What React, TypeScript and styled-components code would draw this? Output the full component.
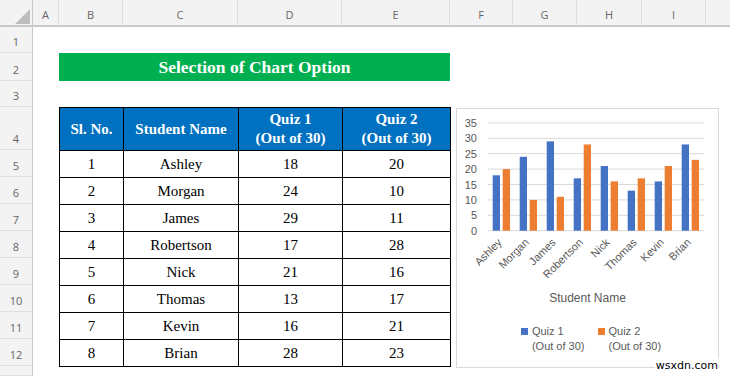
import React from 'react';
import styled, { createGlobalStyle } from 'styled-components';

const GlobalStyle = createGlobalStyle`
  html, body {
    margin: 0;
    padding: 0;
    background: #fff;
  }
  body {
    font-family: 'Liberation Sans', Arial, sans-serif;
  }
`;

// sheet data
const students = [
  { no: 1, name: 'Ashley', q1: 18, q2: 20 },
  { no: 2, name: 'Morgan', q1: 24, q2: 10 },
  { no: 3, name: 'James', q1: 29, q2: 11 },
  { no: 4, name: 'Robertson', q1: 17, q2: 28 },
  { no: 5, name: 'Nick', q1: 21, q2: 16 },
  { no: 6, name: 'Thomas', q1: 13, q2: 17 },
  { no: 7, name: 'Kevin', q1: 16, q2: 21 },
  { no: 8, name: 'Brian', q1: 28, q2: 23 },
];

const columnLetters = ['A', 'B', 'C', 'D', 'E', 'F', 'G', 'H', 'I', ''];

const Sheet = styled.div`
  position: relative;
  display: grid;
  grid-template-columns: 33px 26px 64px 115px 104px 108px 63px 64px 65px 64px 1fr;
  grid-template-rows: 27px 26px 28px 26px 43px repeat(8, 27px) 1fr;
  width: 730px;
  height: 376px;
  overflow: hidden;
  background: #fff;
`;

const Corner = styled.div`
  grid-row: 1;
  grid-column: 1;
  position: relative;
  background: #f3f3f3;
  border-right: 1px solid #c8c8c8;
  border-bottom: 2px solid #c8c8c8;
  box-sizing: border-box;

  &::after {
    content: '';
    position: absolute;
    left: 15px;
    top: 9px;
    width: 15px;
    height: 15px;
    background: #bdbdbd;
    clip-path: polygon(100% 0, 100% 100%, 0 100%);
  }
`;

const ColHeader = styled.div<{ $col: number; $last?: boolean }>`
  grid-row: 1;
  grid-column: ${(p) => p.$col};
  display: flex;
  align-items: center;
  justify-content: center;
  padding-top: 4px;
  box-sizing: border-box;
  background: #f3f3f3;
  border-right: ${(p) => (p.$last ? 'none' : '1px solid #dcdcdc')};
  border-bottom: 2px solid #c8c8c8;
  font-family: 'Open Sans', 'Liberation Sans', sans-serif;
  font-size: 11px;
  color: #666;
`;

const RowHeader = styled.div<{ $row: number }>`
  grid-column: 1;
  grid-row: ${(p) => p.$row};
  display: flex;
  align-items: flex-end;
  justify-content: center;
  padding-bottom: 3px;
  box-sizing: border-box;
  background: #f3f3f3;
  border-right: 1px solid #c8c8c8;
  border-bottom: 1px solid #dedede;
  font-family: 'Open Sans', 'Liberation Sans', sans-serif;
  font-size: 11px;
  line-height: 14px;
  color: #666;
`;

const TitleBar = styled.div`
  grid-row: 3;
  grid-column: 3 / 7;
  display: flex;
  align-items: center;
  justify-content: center;
  background: #00b050;
  color: #fff;
  font-family: 'Liberation Serif', 'Times New Roman', serif;
  font-weight: bold;
  font-size: 17.5px;
`;

const ScoreTable = styled.table`
  grid-row: 5 / 14;
  grid-column: 3 / 7;
  width: 391px;
  border-collapse: collapse;
  table-layout: fixed;
  font-family: 'Liberation Serif', 'Times New Roman', serif;
  font-size: 15px;
  color: #000;

  th,
  td {
    border: 1px solid #000;
    padding: 0;
    text-align: center;
    vertical-align: middle;
  }

  th {
    height: 42px;
    background: #0070c0;
    color: #fff;
    font-weight: bold;
    line-height: 19px;
  }

  td {
    height: 26px;
  }
`;

const ChartBox = styled.div`
  grid-row: 5 / 15;
  grid-column: 7 / 12;
  margin: 1px 11px 8px 6px;
  border: 1px solid #d9d9d9;
  background: #fff;
  display: flex;
  flex-direction: column;
  font-family: 'Liberation Sans', Arial, sans-serif;
  color: #595959;
`;

const PlotSvg = styled.svg`
  display: block;
  overflow: visible;
  flex: none;
`;

const AxisTitle = styled.div`
  margin-top: 6px;
  text-align: center;
  font-size: 12px;
  line-height: 16px;
`;

const Legend = styled.div`
  display: flex;
  justify-content: center;
  gap: 13px;
  margin-top: 18px;
  padding-left: 7px;
  font-size: 11px;
  line-height: 15px;
`;

const LegendItem = styled.div`
  display: flex;
  align-items: flex-start;
  gap: 4px;
`;

const Swatch = styled.span<{ $color: string }>`
  width: 7px;
  height: 7px;
  margin-top: 4px;
  background: ${(p) => p.$color};
  flex: none;
`;

const Watermark = styled.div`
  position: absolute;
  right: 11px;
  bottom: 4px;
  padding: 0 1px;
  background: #fff;
  color: #000;
  font-family: 'DejaVu Sans', Verdana, sans-serif;
  font-size: 11px;
  line-height: 13px;
`;

const BLUE = '#4472c4';
const ORANGE = '#ed7d31';

// plot geometry, relative to the chart content box
const X0 = 31;
const X1 = 247;
const Y_ZERO = 121.7;
const UNIT = 3.08;
const CAT_W = (X1 - X0) / 8;

const ColumnChart: React.FC = () => {
  const ticks = [0, 5, 10, 15, 20, 25, 30, 35];
  return (
    <PlotSvg width={261} height={175}>
      {ticks.map((t) => {
        const y = Y_ZERO - t * UNIT;
        return (
          <g key={t}>
            <line x1={X0} x2={X1} y1={y} y2={y} stroke="#d9d9d9" strokeWidth={1} />
            <text x={20} y={y + 4} textAnchor="end" fontSize={11} fill="#595959">
              {t}
            </text>
          </g>
        );
      })}
      {students.map((s, i) => {
        const left = X0 + i * CAT_W + 4.7;
        const cx = X0 + i * CAT_W + CAT_W / 2;
        return (
          <g key={s.name}>
            <rect x={left} y={Y_ZERO - s.q1 * UNIT} width={7.3} height={s.q1 * UNIT} fill={BLUE} />
            <rect x={left + 10} y={Y_ZERO - s.q2 * UNIT} width={7.3} height={s.q2 * UNIT} fill={ORANGE} />
            <text
              transform={`translate(${cx + 1}, 134) rotate(-45)`}
              textAnchor="end"
              fontSize={11}
              fill="#595959"
            >
              {s.name}
            </text>
          </g>
        );
      })}
    </PlotSvg>
  );
};

const rowNumbers = Array.from({ length: 12 }, (_, i) => i + 1);

const App: React.FC = () => {
  return (
    <>
      <GlobalStyle />
      <Sheet>
        <Corner />
        {columnLetters.map((c, i) => (
          <ColHeader key={i} $col={i + 2} $last={i === columnLetters.length - 1}>
            {c}
          </ColHeader>
        ))}
        {rowNumbers.map((n) => (
          <RowHeader key={n} $row={n + 1}>
            {n}
          </RowHeader>
        ))}
        <RowHeader $row={14} />

        <TitleBar>Selection of Chart Option</TitleBar>

        <ScoreTable>
          <colgroup>
            <col style={{ width: 64 }} />
            <col style={{ width: 115 }} />
            <col style={{ width: 104 }} />
            <col style={{ width: 108 }} />
          </colgroup>
          <thead>
            <tr>
              <th>Sl. No.</th>
              <th>Student Name</th>
              <th>
                Quiz 1
                <br />
                (Out of 30)
              </th>
              <th>
                Quiz 2
                <br />
                (Out of 30)
              </th>
            </tr>
          </thead>
          <tbody>
            {students.map((s) => (
              <tr key={s.no}>
                <td>{s.no}</td>
                <td>{s.name}</td>
                <td>{s.q1}</td>
                <td>{s.q2}</td>
              </tr>
            ))}
          </tbody>
        </ScoreTable>

        <ChartBox>
          <ColumnChart />
          <AxisTitle>Student Name</AxisTitle>
          <Legend>
            <LegendItem>
              <Swatch $color={BLUE} />
              <div>
                Quiz 1
                <br />
                (Out of 30)
              </div>
            </LegendItem>
            <LegendItem>
              <Swatch $color={ORANGE} />
              <div>
                Quiz 2
                <br />
                (Out of 30)
              </div>
            </LegendItem>
          </Legend>
        </ChartBox>

        <Watermark>wsxdn.com</Watermark>
      </Sheet>
    </>
  );
};

export default App;
